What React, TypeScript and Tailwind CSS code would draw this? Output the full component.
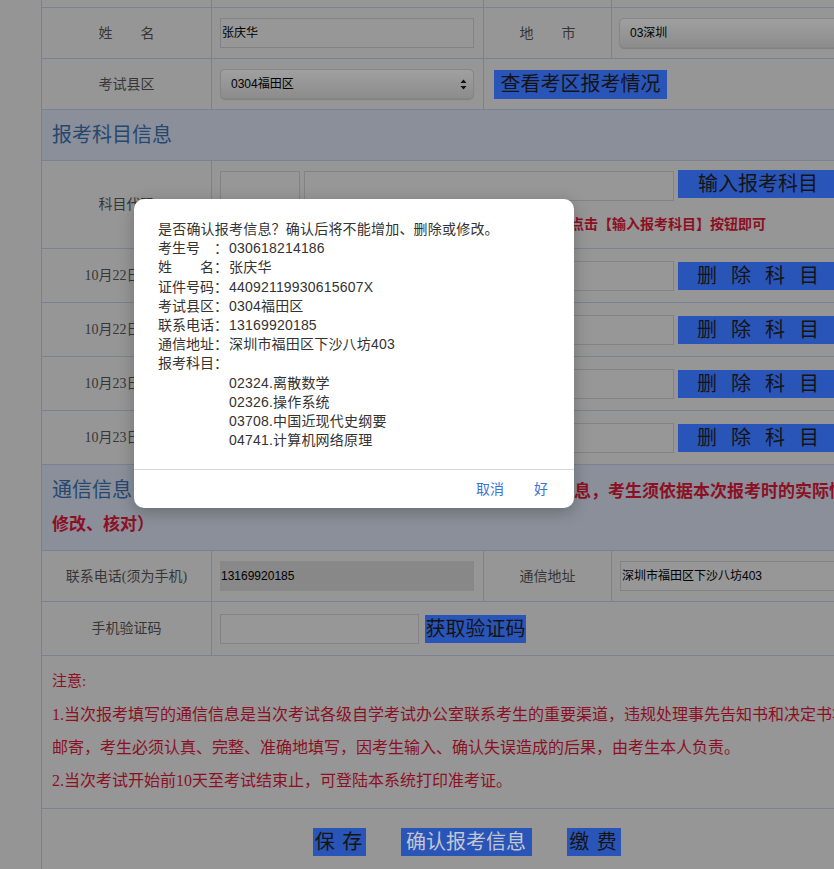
import React from "react";

const serif = "font-['Liberation_Serif','Noto_Sans_CJK_SC',serif]";
const sans = "font-['Liberation_Sans','Noto_Sans_CJK_SC',sans-serif]";

function Label({ children }: { children: React.ReactNode }) {
  return (
    <div className={`flex w-[170px] shrink-0 items-center justify-center border-r border-[#7d8090] text-[14px] text-[#363636] ${serif}`}>
      {children}
    </div>
  );
}

function Field({ value = "", className = "" }: { value?: string; className?: string }) {
  return (
    <div className={`flex h-[30px] items-center border border-[#838383] bg-[#979797] px-[1px] text-[12px] text-black ${sans} ${className}`}>
      {value}
    </div>
  );
}

function Select({ value, arrows = false, className = "" }: { value: string; arrows?: boolean; className?: string }) {
  return (
    <div className={`flex h-[30px] items-center justify-between rounded-[5px] border border-[#868686] bg-linear-to-b from-[#a0a0a0] to-[#8c8c8c] pl-[10px] pr-[6px] text-[12px] text-black shadow-[0_1px_1px_rgba(0,0,0,0.15)] ${sans} ${className}`}>
      <span>{value}</span>
      {arrows && (
        <svg width="7" height="11" viewBox="0 0 7 11">
          <path d="M3.5 0.5 L6.5 4 L0.5 4 Z M3.5 10.5 L6.5 7 L0.5 7 Z" fill="#111" />
        </svg>
      )}
    </div>
  );
}

function BlueButton({ children, className = "" }: { children: React.ReactNode; className?: string }) {
  return (
    <div className={`flex h-[28px] shrink-0 items-center justify-center whitespace-nowrap bg-[#2a55b8] text-[20px] leading-none text-[#141414] ${sans} ${className}`}>
      {children}
    </div>
  );
}

function SubjectRow({ label }: { label: string }) {
  return (
    <div className="flex h-[54px] border-b border-[#7d8090]">
      <Label>{label}</Label>
      <div className="flex flex-1 items-center gap-[4px] pl-[8px]">
        <Field className="w-[454px]" />
        <BlueButton className="w-[160px] pl-[14px] tracking-[14px]">删除科目</BlueButton>
      </div>
    </div>
  );
}

const info: [string, string][] = [
  ["考生号　：", "030618214186"],
  ["姓　　名：", "张庆华"],
  ["证件号码：", "44092119930615607X"],
  ["考试县区：", "0304福田区"],
  ["联系电话：", "13169920185"],
  ["通信地址：", "深圳市福田区下沙八坊403"],
  ["报考科目：", ""],
];

const subjects = ["02324.离散数学", "02326.操作系统", "03708.中国近现代史纲要", "04741.计算机网络原理"];

export default function App() {
  return (
    <div className="relative flex h-[869px] w-[834px] overflow-hidden bg-[#959595]">
      <div className="w-[41px] shrink-0" />
      <div className="w-[850px] shrink-0 border-l border-[#7d8090] bg-[#969696]">
        {/* cut-off row above */}
        <div className="flex h-[8px] border-b border-[#7d8090]">
          <div className="w-[170px] shrink-0 border-r border-[#7d8090]" />
          <div className="w-[272px] shrink-0 border-r border-[#7d8090]" />
          <div className="w-[128px] shrink-0 border-r border-[#7d8090]" />
          <div className="flex-1" />
        </div>

        <div className="flex h-[51px] border-b border-[#7d8090]">
          <Label>姓　　名</Label>
          <div className="flex w-[272px] shrink-0 items-center border-r border-[#7d8090] pl-[8px]">
            <Field value="张庆华" className="w-[254px]" />
          </div>
          <div className={`flex w-[128px] shrink-0 items-center justify-center border-r border-[#7d8090] text-[14px] text-[#363636] ${serif}`}>
            地　　市
          </div>
          <div className="flex flex-1 items-center pl-[7px]">
            <Select value="03深圳" className="w-[232px]" />
          </div>
        </div>

        <div className="flex h-[51px] border-b border-[#7d8090]">
          <Label>考试县区</Label>
          <div className="flex w-[272px] shrink-0 items-center border-r border-[#7d8090] pl-[8px]">
            <Select value="0304福田区" arrows className="w-[254px]" />
          </div>
          <div className="flex flex-1 items-center pl-[10px]">
            <BlueButton className="h-[29px] w-[173px]">查看考区报考情况</BlueButton>
          </div>
        </div>

        <div className={`flex h-[51px] items-center border-b border-[#7d8090] bg-[#8a8f99] pl-[10px] text-[20px] text-[#264870] ${sans}`}>
          报考科目信息
        </div>

        <div className="flex h-[88px] border-b border-[#7d8090]">
          <Label>科目代码</Label>
          <div className="flex flex-1 flex-col pl-[8px] pt-[9px]">
            <div className="flex items-start gap-[4px]">
              <Field className="mt-[1px] w-[80px]" />
              <Field className="mt-[1px] w-[370px]" />
              <BlueButton className="h-[27px] w-[160px]">输入报考科目</BlueButton>
            </div>
            <div className={`mt-[13px] whitespace-nowrap text-[14px] font-bold text-[#8c1024] ${serif}`}>
              如需增加报考科目，请在上方输入框中输入科目代码然后点击【输入报考科目】按钮即可
            </div>
          </div>
        </div>

        <SubjectRow label="10月22日上午" />
        <SubjectRow label="10月22日下午" />
        <SubjectRow label="10月23日上午" />
        <SubjectRow label="10月23日下午" />

        <div className="h-[86px] border-b border-[#7d8090] bg-[#8a8f99] pl-[10px] pt-[9px] leading-[33px] whitespace-nowrap">
          <div>
            <span className={`text-[20px] text-[#264870] ${sans}`}>通信信息</span>
            <span className={`text-[17px] font-bold text-[#8c1024] ${serif}`}>
              （请认真核对以下由考生本人在网上报名时所填写的通信信息，考生须依据本次报考时的实际情况
            </span>
          </div>
          <div className={`text-[17px] font-bold text-[#8c1024] ${serif}`}>修改、核对）</div>
        </div>

        <div className="flex h-[51px] border-b border-[#7d8090]">
          <Label>联系电话(须为手机)</Label>
          <div className="flex w-[272px] shrink-0 items-center border-r border-[#7d8090] pl-[8px]">
            <div className={`flex h-[30px] w-[254px] items-center bg-[#888888] px-[1px] text-[12px] text-black ${sans}`}>
              13169920185
            </div>
          </div>
          <div className={`flex w-[128px] shrink-0 items-center justify-center border-r border-[#7d8090] text-[14px] text-[#363636] ${serif}`}>
            通信地址
          </div>
          <div className="flex flex-1 items-center pl-[8px]">
            <Field value="深圳市福田区下沙八坊403" className="w-[232px]" />
          </div>
        </div>

        <div className="flex h-[54px] border-b border-[#7d8090]">
          <Label>手机验证码</Label>
          <div className="flex flex-1 items-center gap-[6px] pl-[8px]">
            <Field className="w-[199px]" />
            <BlueButton className="w-[101px]">获取验证码</BlueButton>
          </div>
        </div>

        <div className={`h-[153px] border-b border-[#7d8090] pl-[10px] pt-[9px] text-[16px] leading-[33px] whitespace-nowrap text-[#8c1024] ${serif}`}>
          <div className="text-[15px]">注意:</div>
          <div>1.当次报考填写的通信信息是当次考试各级自学考试办公室联系考生的重要渠道，违规处理事先告知书和决定书将通过</div>
          <div>邮寄，考生必须认真、完整、准确地填写，因考生输入、确认失误造成的后果，由考生本人负责。</div>
          <div>2.当次考试开始前10天至考试结束止，可登陆本系统打印准考证。</div>
        </div>

        <div className="flex justify-center gap-[35px] pt-[19px]">
          <BlueButton className="w-[53px] tracking-[1px]">保 存</BlueButton>
          <BlueButton className="w-[131px] text-[#c3c6d0]">确认报考信息</BlueButton>
          <BlueButton className="w-[54px] tracking-[1px] text-[#4a6aa6]">缴 费</BlueButton>
        </div>
      </div>

      {/* confirm dialog */}
      <div className={`absolute left-[134px] top-[199px] flex h-[309px] w-[440px] flex-col rounded-[10px] bg-white shadow-[0_4px_16px_rgba(0,0,0,0.25)] ${sans}`}>
        <div className="h-[270px] px-[24px] pt-[21px] text-[14px] leading-[19.2px] text-[#333]">
          <div className="tracking-[0.2px]">是否确认报考信息？确认后将不能增加、删除或修改。</div>
          {info.map(([k, v]) => (
            <div key={k} className="flex">
              <span className="w-[71px] shrink-0">{k}</span>
              <span className="tracking-[0.2px]">{v}</span>
            </div>
          ))}
          {subjects.map((s) => (
            <div key={s} className="pl-[71px] tracking-[0.2px]">{s}</div>
          ))}
        </div>
        <div className="flex flex-1 items-center justify-end gap-[30px] border-t border-[#d8d8d8] pr-[26px] text-[14px] text-[#3b73d6]">
          <span>取消</span>
          <span>好</span>
        </div>
      </div>
    </div>
  );
}
